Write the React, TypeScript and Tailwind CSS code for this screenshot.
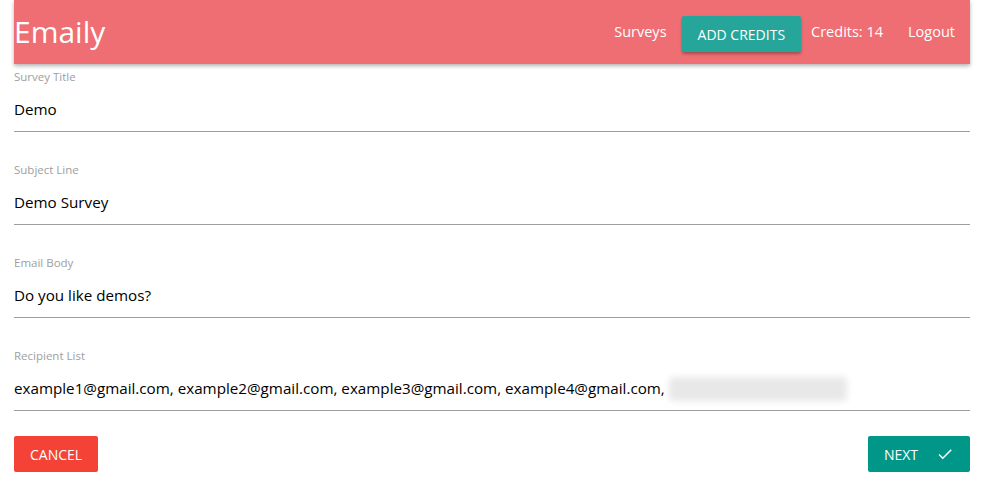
import React from "react";

const font = { fontFamily: '"Open Sans", "Noto Sans", sans-serif' };

function Field({ label, value, children }: { label: string; value?: string; children?: React.ReactNode }) {
  return (
    <div className="mb-[30px]">
      <div className="text-[11.5px] leading-[15px] text-[#9e9e9e]">{label}</div>
      <div className="h-[48px] pt-1 flex items-center border-b border-[#9e9e9e] text-[15.2px] text-black whitespace-nowrap">
        {value}
        {children}
      </div>
    </div>
  );
}

export default function App() {
  return (
    <div className="w-[985px] h-[494px] bg-white" style={font}>
      <div className="mx-[14px] w-[956px]">
        <nav className="h-16 bg-[#ee6e73] text-white flex items-center justify-between shadow-[0_2px_4px_rgba(0,0,0,0.3)]">
          <div className="text-[30px] leading-none -mt-[1px]">Emaily</div>
          <div className="flex items-center text-[14.5px] h-full">
            <span className="px-[15px]">Surveys</span>
            <span className="h-9 px-4 bg-[#26a69a] rounded-[2px] flex items-center text-[14px] shadow-[0_2px_3px_rgba(0,0,0,0.3)] mt-[4px]">ADD CREDITS</span>
            <span className="pl-[10px] pr-[25px]">Credits: 14</span>
            <span className="pr-[15px]">Logout</span>
          </div>
        </nav>
        <div className="pt-[5px]">
          <Field label="Survey Title" value="Demo" />
          <Field label="Subject Line" value="Demo Survey" />
          <Field label="Email Body" value="Do you like demos?" />
          <Field label="Recipient List">
            <span>example1@gmail.com, example2@gmail.com, example3@gmail.com, example4@gmail.com,</span>
            <span className="ml-[4px] inline-block w-[178px] h-[24px] rounded bg-[#e8e8e8] blur-[3px]" />
          </Field>
        </div>
        <div className="-mt-[5px] flex justify-between">
          <button className="h-9 px-4 bg-[#f44336] text-white text-[14px] rounded-[2px]">CANCEL</button>
          <button className="h-9 px-4 bg-[#009688] text-white text-[14px] rounded-[2px] flex items-center gap-[18px]">
            NEXT
            <svg width="18" height="18" viewBox="0 0 24 24" fill="white"><path d="M9 16.17L4.83 12l-1.42 1.41L9 19 21 7l-1.41-1.41z" /></svg>
          </button>
        </div>
      </div>
    </div>
  );
}
